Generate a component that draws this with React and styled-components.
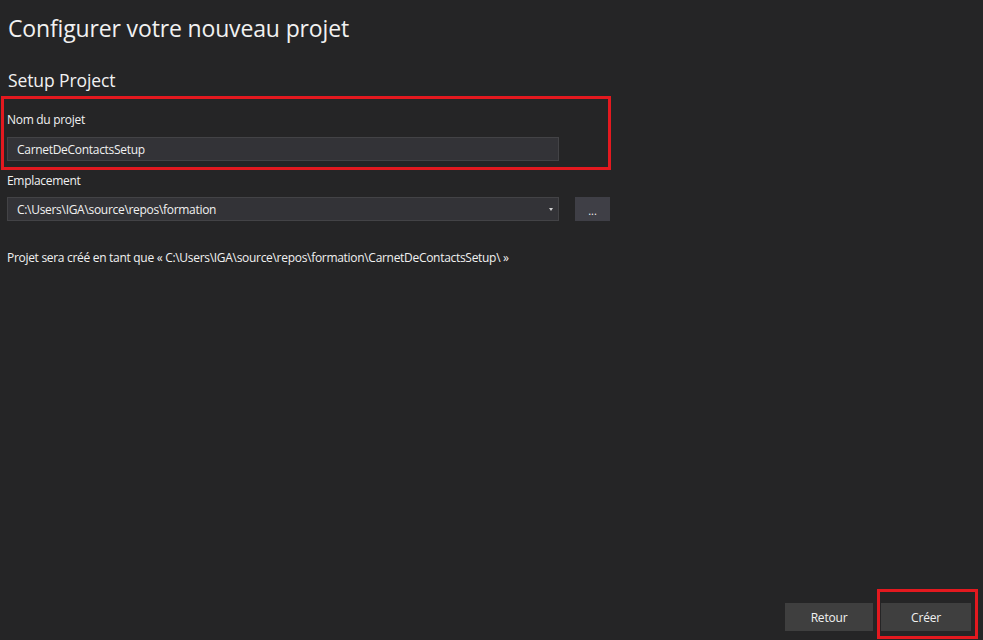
import React from "react";
import styled, { createGlobalStyle } from "styled-components";

const GlobalStyle = createGlobalStyle`
  html, body {
    margin: 0;
    padding: 0;
    background: #252526;
  }
  body {
    font-family: "Open Sans", "Noto Sans", sans-serif;
    color: #f1f1f1;
  }
`;

const Page = styled.div`
  display: flex;
  flex-direction: column;
  min-height: 100vh;
  box-sizing: border-box;
  padding: 0 0 1px 7px;
  background: #252526;
`;

const Title = styled.h1`
  margin: 12px 0 0 1px;
  font-size: 23px;
  font-weight: 400;
  line-height: 32px;
  letter-spacing: -0.15px;
`;

const Subtitle = styled.h2`
  margin: 24px 0 0 1px;
  font-size: 17.5px;
  font-weight: 400;
  line-height: 24px;
  letter-spacing: -0.1px;
`;

const Highlight = styled.div`
  border: 3px solid #e3191f;
  box-sizing: border-box;
  width: ${(p) => p.$width}px;
  margin: ${(p) => p.$margin || "0"};
  padding: ${(p) => p.$padding || "0"};
`;

const Field = styled.div`
  display: flex;
  flex-direction: column;
  margin-top: ${(p) => p.$top || 0}px;
`;

const Label = styled.label`
  font-size: 12px;
  line-height: 16px;
  letter-spacing: -0.3px;
  margin-bottom: ${(p) => p.$gap || 9}px;
`;

const Row = styled.div`
  display: flex;
  gap: 16px;
`;

const Input = styled.div`
  width: 552px;
  height: 24px;
  box-sizing: border-box;
  display: flex;
  align-items: center;
  padding: 0 9px;
  background: #333337;
  border: 1px solid #434346;
  font-size: 12px;
  letter-spacing: -0.3px;
  position: relative;
`;

const Caret = styled.span`
  position: absolute;
  right: 5px;
  top: 10px;
  width: 0;
  height: 0;
  border-left: 2.5px solid transparent;
  border-right: 2.5px solid transparent;
  border-top: 3px solid #d0d0d0;
`;

const BrowseButton = styled.div`
  width: 35px;
  height: 24px;
  box-sizing: border-box;
  background: #3f3f46;
  display: flex;
  align-items: center;
  justify-content: center;
  font-size: 11px;
  padding-top: 3px;
`;

const Note = styled.p`
  margin: 29px 0 0;
  font-size: 12px;
  line-height: 16px;
  letter-spacing: -0.3px;
`;

const Footer = styled.div`
  margin-top: auto;
  display: flex;
  justify-content: flex-end;
  align-items: flex-end;
  gap: 4px;
  padding-right: 5px;
`;

const Button = styled.div`
  width: ${(p) => p.$width || 88}px;
  height: 28px;
  box-sizing: border-box;
  background: #3f3f3f;
  display: flex;
  align-items: center;
  justify-content: center;
  font-size: 12px;
  letter-spacing: -0.2px;
  margin-bottom: ${(p) => p.$bottom || 0}px;
`;

export default function App() {
  return (
    <>
      <GlobalStyle />
      <Page>
        <Title>Configurer votre nouveau projet</Title>
        <Subtitle>Setup Project</Subtitle>

        <Highlight $width={610} $margin="4px 0 0 -6px" $padding="13px 0 6px 3px">
          <Field>
            <Label $gap={9}>Nom du projet</Label>
            <Input>CarnetDeContactsSetup</Input>
          </Field>
        </Highlight>

        <Field $top={3}>
          <Label $gap={8}>Emplacement</Label>
          <Row>
            <Input>
              C:\Users\IGA\source\repos\formation
              <Caret />
            </Input>
            <BrowseButton>...</BrowseButton>
          </Row>
        </Field>

        <Note>
          Projet sera créé en tant que « C:\Users\IGA\source\repos\formation\CarnetDeContactsSetup\ »
        </Note>

        <Footer>
          <Button $bottom={8}>Retour</Button>
          <Highlight $width={101} $padding="11px 4px 5px 1px">
            <Button $width={90}>Créer</Button>
          </Highlight>
        </Footer>
      </Page>
    </>
  );
}
